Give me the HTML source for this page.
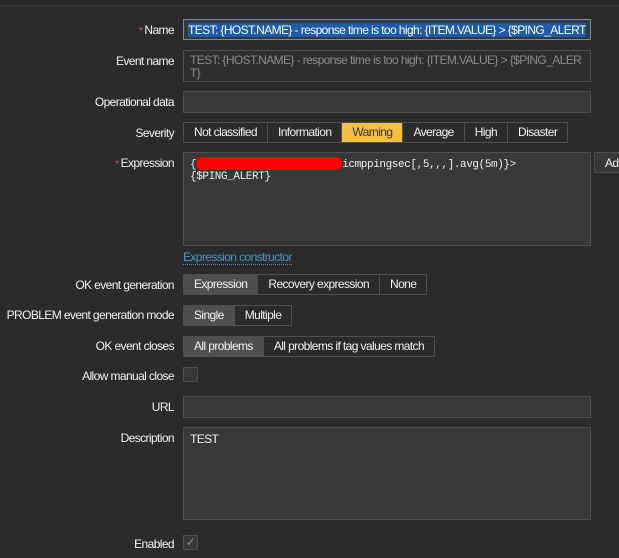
<!DOCTYPE html><html><head><style>
body{margin:0;width:619px;height:558px;background:#2b2b2b;font-family:"Liberation Sans",Arial,sans-serif;font-size:12px;color:#f2f2f2;position:relative;overflow:hidden;letter-spacing:-0.6px}
.top{position:absolute;left:0;top:0;width:619px;height:5px;background:#262626;border-bottom:1px solid #3a3a3a}
.l{position:absolute;right:445px;text-align:right;white-space:nowrap}
.r{color:#e45959;font-size:10px}
.in{position:absolute;left:183px;width:408px;background:#383838;border:1px solid #4f4f4f;box-sizing:border-box}
.seg{position:absolute;left:183px;display:flex;border:1px solid #4f4f4f;background:#2b2b2b}
.seg div{padding:0 10px;border-right:1px solid #4f4f4f;line-height:19px;color:#f2f2f2}
.seg div:last-child{border-right:none}
.seg .on{background:#4f4f4f}
.cb{position:absolute;left:183px;width:15px;height:15px;border:1px solid #4f4f4f;background:#383838;box-sizing:border-box}
.mono{font-family:"Liberation Mono",monospace;font-size:11px;letter-spacing:-0.4px}
</style></head><body>
<div class="top"></div>
<div class="l" style="top:23px"><span class="r">* </span>Name</div>
<div class="in" style="top:19px;height:21px;border-color:#6a8fb0;padding:3px 4px;white-space:nowrap;overflow:hidden"><span style="background:#1e5aa8;color:#fff">TEST: {HOST.NAME} - response time is too high: {ITEM.VALUE} &gt; {$PING_ALERT</span></div>
<div class="l" style="top:54px">Event name</div>
<div class="in" style="top:50px;height:32px;padding:3px 6px;color:#8c8c8c;background:#2e2e2e;line-height:13px;white-space:nowrap;overflow:hidden">TEST: {HOST.NAME} - response time is too high: {ITEM.VALUE} &gt; {$PING_ALER<br>T}</div>
<div class="l" style="top:95px">Operational data</div>
<div class="in" style="top:91px;height:22px"></div>
<div class="l" style="top:126px">Severity</div>
<div class="seg" style="top:122px"><div>Not classified</div><div>Information</div><div style="background:#f5c042;color:#333">Warning</div><div>Average</div><div>High</div><div>Disaster</div></div>
<div class="l" style="top:156px"><span class="r">* </span>Expression</div>
<div class="in mono" style="top:152px;height:94px;padding:4px 6px;line-height:12px">{<span style="display:inline-block;width:146px;height:13px;background:#ff0000;border-radius:6px;vertical-align:-3px"></span>icmppingsec[,5,,,].avg(5m)}&gt;<br>{$PING_ALERT}</div>
<div style="position:absolute;left:594px;top:152px;width:40px;height:21px;border:1px solid #4f4f4f;background:#383838;box-sizing:border-box;padding:3px 10px">Add</div>
<div style="position:absolute;left:183px;top:251px;color:#4796c4;border-bottom:1px dotted #4796c4;line-height:13px">Expression constructor</div>
<div class="l" style="top:278px">OK event generation</div>
<div class="seg" style="top:274px"><div class="on">Expression</div><div>Recovery expression</div><div>None</div></div>
<div class="l" style="top:308px">PROBLEM event generation mode</div>
<div class="seg" style="top:305px"><div class="on">Single</div><div>Multiple</div></div>
<div class="l" style="top:339px">OK event closes</div>
<div class="seg" style="top:336px"><div class="on">All problems</div><div>All problems if tag values match</div></div>
<div class="l" style="top:369px">Allow manual close</div>
<div class="cb" style="top:367px"></div>
<div class="l" style="top:400px">URL</div>
<div class="in" style="top:396px;height:22px"></div>
<div class="l" style="top:431px">Description</div>
<div class="in" style="top:427px;height:93px;padding:4px 6px">TEST</div>
<div class="l" style="top:537px">Enabled</div>
<div class="cb" style="top:535px;color:#8c8c8c;font-size:12px;line-height:13px;text-align:center">✓</div>
</body></html>
